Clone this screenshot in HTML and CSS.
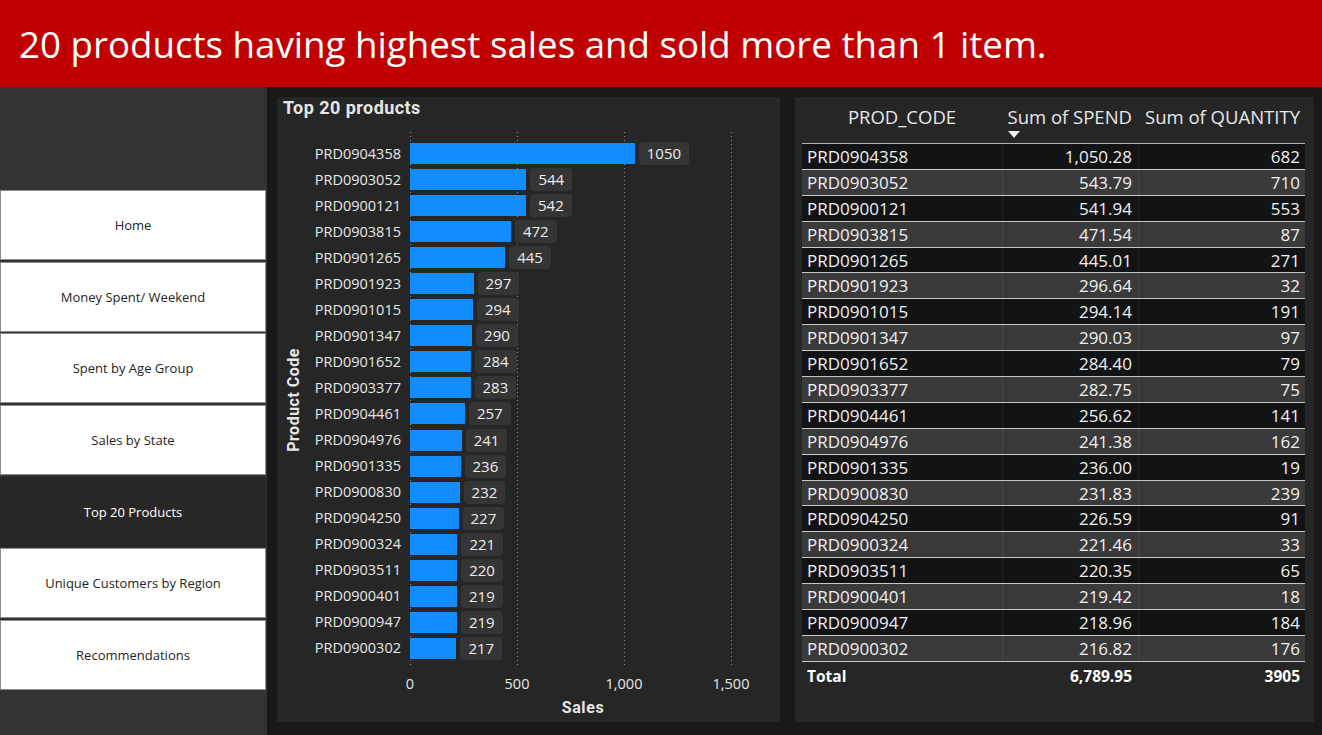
FILE: index.html
```html
<!DOCTYPE html>
<html lang="en">
<head>
<meta charset="utf-8">
<title>Top 20 Products</title>
<link rel="stylesheet" href="styles.css">
</head>
<body>
<header class="banner">
  <h1 class="banner-title">20 products having highest sales and sold more than 1 item.</h1>
</header>
<div class="main">
  <nav class="sidebar">
    <div class="nav-btn">Home</div>
    <div class="nav-btn">Money Spent/ Weekend</div>
    <div class="nav-btn">Spent by Age Group</div>
    <div class="nav-btn">Sales by State</div>
    <div class="nav-btn active">Top 20 Products</div>
    <div class="nav-btn">Unique Customers by Region</div>
    <div class="nav-btn">Recommendations</div>
  </nav>

  <section class="chart-panel">
    <div class="chart-title">Top 20 products</div>
    <div class="chart-body">
      <div class="y-title"><span>Product Code</span></div>
      <div class="labels">
        <div class="code">PRD0904358</div>
        <div class="code">PRD0903052</div>
        <div class="code">PRD0900121</div>
        <div class="code">PRD0903815</div>
        <div class="code">PRD0901265</div>
        <div class="code">PRD0901923</div>
        <div class="code">PRD0901015</div>
        <div class="code">PRD0901347</div>
        <div class="code">PRD0901652</div>
        <div class="code">PRD0903377</div>
        <div class="code">PRD0904461</div>
        <div class="code">PRD0904976</div>
        <div class="code">PRD0901335</div>
        <div class="code">PRD0900830</div>
        <div class="code">PRD0904250</div>
        <div class="code">PRD0900324</div>
        <div class="code">PRD0903511</div>
        <div class="code">PRD0900401</div>
        <div class="code">PRD0900947</div>
        <div class="code">PRD0900302</div>
      </div>
      <div class="plot-col">
        <div class="bars">
          <div class="bar-row"><div class="bar" style="width:224.8px"></div><span class="val">1050</span></div>
          <div class="bar-row"><div class="bar" style="width:116.4px"></div><span class="val">544</span></div>
          <div class="bar-row"><div class="bar" style="width:116px"></div><span class="val">542</span></div>
          <div class="bar-row"><div class="bar" style="width:100.9px"></div><span class="val">472</span></div>
          <div class="bar-row"><div class="bar" style="width:95.2px"></div><span class="val">445</span></div>
          <div class="bar-row"><div class="bar" style="width:63.5px"></div><span class="val">297</span></div>
          <div class="bar-row"><div class="bar" style="width:62.9px"></div><span class="val">294</span></div>
          <div class="bar-row"><div class="bar" style="width:62.1px"></div><span class="val">290</span></div>
          <div class="bar-row"><div class="bar" style="width:60.9px"></div><span class="val">284</span></div>
          <div class="bar-row"><div class="bar" style="width:60.5px"></div><span class="val">283</span></div>
          <div class="bar-row"><div class="bar" style="width:54.9px"></div><span class="val">257</span></div>
          <div class="bar-row"><div class="bar" style="width:51.7px"></div><span class="val">241</span></div>
          <div class="bar-row"><div class="bar" style="width:50.5px"></div><span class="val">236</span></div>
          <div class="bar-row"><div class="bar" style="width:49.6px"></div><span class="val">232</span></div>
          <div class="bar-row"><div class="bar" style="width:48.5px"></div><span class="val">227</span></div>
          <div class="bar-row"><div class="bar" style="width:47.4px"></div><span class="val">221</span></div>
          <div class="bar-row"><div class="bar" style="width:47.2px"></div><span class="val">220</span></div>
          <div class="bar-row"><div class="bar" style="width:47px"></div><span class="val">219</span></div>
          <div class="bar-row"><div class="bar" style="width:46.9px"></div><span class="val">219</span></div>
          <div class="bar-row"><div class="bar" style="width:46.4px"></div><span class="val">217</span></div>
        </div>
        <div class="x-axis">
          <span>0</span><span>500</span><span>1,000</span><span>1,500</span>
        </div>
        <div class="x-title">Sales</div>
      </div>
    </div>
  </section>

  <section class="table-panel">
    <div class="tbl">
      <div class="thead">
        <div class="th c1">PROD_CODE</div>
        <div class="th c2">Sum of SPEND<i class="sort"></i></div>
        <div class="th c3">Sum of QUANTITY</div>
      </div>
      <div class="tr"><div class="td c1">PRD0904358</div><div class="td c2">1,050.28</div><div class="td c3">682</div></div>
      <div class="tr"><div class="td c1">PRD0903052</div><div class="td c2">543.79</div><div class="td c3">710</div></div>
      <div class="tr"><div class="td c1">PRD0900121</div><div class="td c2">541.94</div><div class="td c3">553</div></div>
      <div class="tr"><div class="td c1">PRD0903815</div><div class="td c2">471.54</div><div class="td c3">87</div></div>
      <div class="tr"><div class="td c1">PRD0901265</div><div class="td c2">445.01</div><div class="td c3">271</div></div>
      <div class="tr"><div class="td c1">PRD0901923</div><div class="td c2">296.64</div><div class="td c3">32</div></div>
      <div class="tr"><div class="td c1">PRD0901015</div><div class="td c2">294.14</div><div class="td c3">191</div></div>
      <div class="tr"><div class="td c1">PRD0901347</div><div class="td c2">290.03</div><div class="td c3">97</div></div>
      <div class="tr"><div class="td c1">PRD0901652</div><div class="td c2">284.40</div><div class="td c3">79</div></div>
      <div class="tr"><div class="td c1">PRD0903377</div><div class="td c2">282.75</div><div class="td c3">75</div></div>
      <div class="tr"><div class="td c1">PRD0904461</div><div class="td c2">256.62</div><div class="td c3">141</div></div>
      <div class="tr"><div class="td c1">PRD0904976</div><div class="td c2">241.38</div><div class="td c3">162</div></div>
      <div class="tr"><div class="td c1">PRD0901335</div><div class="td c2">236.00</div><div class="td c3">19</div></div>
      <div class="tr"><div class="td c1">PRD0900830</div><div class="td c2">231.83</div><div class="td c3">239</div></div>
      <div class="tr"><div class="td c1">PRD0904250</div><div class="td c2">226.59</div><div class="td c3">91</div></div>
      <div class="tr"><div class="td c1">PRD0900324</div><div class="td c2">221.46</div><div class="td c3">33</div></div>
      <div class="tr"><div class="td c1">PRD0903511</div><div class="td c2">220.35</div><div class="td c3">65</div></div>
      <div class="tr"><div class="td c1">PRD0900401</div><div class="td c2">219.42</div><div class="td c3">18</div></div>
      <div class="tr"><div class="td c1">PRD0900947</div><div class="td c2">218.96</div><div class="td c3">184</div></div>
      <div class="tr"><div class="td c1">PRD0900302</div><div class="td c2">216.82</div><div class="td c3">176</div></div>
      <div class="tfoot">
        <div class="tf c1">Total</div>
        <div class="tf c2">6,789.95</div>
        <div class="tf c3">3905</div>
      </div>
    </div>
  </section>
</div>
</body>
</html>
```

FILE: styles.css
```css
* { box-sizing: border-box; }
html, body {
  margin: 0;
  padding: 0;
  width: 1322px;
  height: 735px;
  overflow: hidden;
  background: #18191b;
  font-family: "Open Sans", "Noto Sans", sans-serif;
}

.banner {
  height: 87px;
  background: #c00000;
  display: flex;
  align-items: center;
  padding-left: 19px;
}
.banner-title {
  margin: 0;
  font-weight: 400;
  font-size: 36.7px;
  line-height: 1;
  color: #ffffff;
  padding-top: 1px;
}

.main {
  display: flex;
  height: 648px;
  background: #18191b;
}

/* sidebar */
.sidebar {
  width: 267px;
  flex: none;
  background: #333333;
  padding-top: 103px;
  display: flex;
  flex-direction: column;
  gap: 1.67px;
}
.nav-btn {
  height: 70px;
  width: 266px;
  background: #ffffff;
  border: 1px solid #8c8c8c;
  display: flex;
  align-items: center;
  justify-content: center;
  font-size: 13px;
  color: #252423;
}
.nav-btn.active {
  background: #282726;
  border-color: #282726;
  color: #ffffff;
}

/* chart */
.chart-panel {
  margin-left: 10px;
  margin-top: 10px;
  width: 503px;
  height: 625px;
  background: #262626;
  flex: none;
}
.chart-title {
  height: 22px;
  line-height: 22px;
  padding-left: 6px;
  font-family: "Roboto", "Noto Sans", sans-serif;
  font-weight: 700;
  font-size: 18px;
  letter-spacing: 0.45px;
  color: #e6e6e6;
}
.chart-body {
  display: flex;
  margin-top: 13px;
  padding-left: 6px;
}
.y-title {
  width: 20px;
  height: 536px;
  display: flex;
  align-items: center;
  justify-content: center;
}
.y-title span {
  writing-mode: vertical-rl;
  transform: rotate(180deg);
  font-family: "Roboto", "Noto Sans", sans-serif;
  font-weight: 700;
  font-size: 16px;
  letter-spacing: 0.5px;
  color: #e6e6e6;
}
.labels {
  width: 98px;
  padding-top: 8.5px;
}
.code {
  height: 26.05px;
  line-height: 26px;
  text-align: right;
  font-size: 14.5px;
  color: #e6e6e6;
}
.plot-col {
  margin-left: 9px;
  width: 350px;
}
.bars {
  height: 536px;
  padding-top: 8.5px;
  background-image:
    linear-gradient(#8a8a8a 34%, transparent 34%),
    linear-gradient(#8a8a8a 34%, transparent 34%),
    linear-gradient(#8a8a8a 34%, transparent 34%),
    linear-gradient(#8a8a8a 34%, transparent 34%);
  background-size: 1px 4px;
  background-position: 0 0, 107px 0, 214px 0, 321px 0;
  background-repeat: repeat-y;
}
.bar-row {
  height: 26.05px;
  display: flex;
  align-items: center;
}
.bar {
  height: 21px;
  background: #118dff;
  flex: none;
}
.val {
  margin-left: 4px;
  height: 23px;
  line-height: 23px;
  padding: 0 8px;
  background: #353535;
  border-radius: 4px;
  font-size: 15px;
  color: #eeeeee;
}
.x-axis {
  display: grid;
  grid-template-columns: repeat(4, 107px);
  margin-left: -53.5px;
  height: 31px;
  align-items: center;
}
.x-axis span {
  text-align: center;
  font-size: 14.5px;
  color: #e6e6e6;
}
.x-title {
  width: 346px;
  text-align: center;
  font-family: "Roboto", "Noto Sans", sans-serif;
  font-weight: 700;
  font-size: 16px;
  letter-spacing: 0.6px;
  color: #e6e6e6;
  line-height: 18px;
}

/* table */
.table-panel {
  margin-left: 15px;
  margin-top: 10px;
  width: 519px;
  height: 625px;
  background: #262626;
  flex: none;
  padding-left: 7px;
}
.tbl {
  width: 503px;
}
.thead {
  display: flex;
  height: 47px;
  border-bottom: 1px solid #b0b0b0;
}
.th {
  position: relative;
  padding-top: 8px;
  font-size: 18.5px;
  line-height: 24px;
  color: #e8e8e8;
  white-space: nowrap;
}
.c1 { width: 200px; }
.c2 { width: 136px; }
.c3 { width: 167px; }
.th.c1 { text-align: center; }
.th.c2, .th.c3 { text-align: right; padding-right: 5px; }
.th.c2 { padding-right: 6px; }
.sort {
  position: absolute;
  left: 6px;
  top: 34px;
  width: 0;
  height: 0;
  border-left: 6px solid transparent;
  border-right: 6px solid transparent;
  border-top: 7px solid #f0f0f0;
}
.tr {
  display: flex;
  height: 25.9px;
  border-bottom: 1px solid #c8c8c8;
  background: #121315;
}
.tr:nth-of-type(odd) {
  background: #3a3a3a;
}
.td {
  font-size: 17px;
  line-height: 25px;
  color: #f0f0f0;
  white-space: nowrap;
}
.td.c1 { padding-left: 5px; }
.td.c2 { text-align: right; padding-right: 6px; border-left: 1px solid rgba(255,255,255,0.06); }
.td.c3 { text-align: right; padding-right: 5px; border-left: 1px solid rgba(255,255,255,0.06); }
.tfoot {
  display: flex;
  height: 28px;
  align-items: center;
}
.tf {
  font-size: 15.5px;
  font-weight: 700;
  color: #ffffff;
}
.tf.c1 { padding-left: 5px; }
.tf.c2 { text-align: right; padding-right: 6px; }
.tf.c3 { text-align: right; padding-right: 5px; }
```
